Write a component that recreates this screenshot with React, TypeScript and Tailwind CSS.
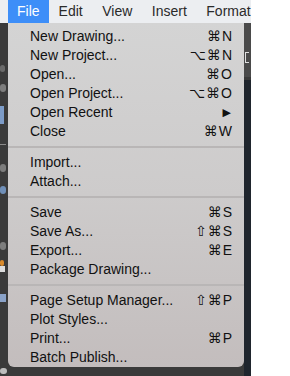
import React from 'react';

type Entry = { label: string; shortcut?: string; submenu?: boolean } | 'sep';

const ENTRIES: Entry[] = [
  { label: 'New Drawing...', shortcut: '⌘N' },
  { label: 'New Project...', shortcut: '⌥⌘N' },
  { label: 'Open...', shortcut: '⌘O' },
  { label: 'Open Project...', shortcut: '⌥⌘O' },
  { label: 'Open Recent', submenu: true },
  { label: 'Close', shortcut: '⌘W' },
  'sep',
  { label: 'Import...' },
  { label: 'Attach...' },
  'sep',
  { label: 'Save', shortcut: '⌘S' },
  { label: 'Save As...', shortcut: '⇧⌘S' },
  { label: 'Export...', shortcut: '⌘E' },
  { label: 'Package Drawing...' },
  'sep',
  { label: 'Page Setup Manager...', shortcut: '⇧⌘P' },
  { label: 'Plot Styles...' },
  { label: 'Print...', shortcut: '⌘P' },
  { label: 'Batch Publish...' },
];

const MENUS = ['Edit', 'View', 'Insert', 'Format'];

const font = { fontFamily: '"Liberation Sans", Arial, "DejaVu Sans", sans-serif' };
const symFont = { fontFamily: '"DejaVu Sans", sans-serif' };

function Shortcut({ keys }: { keys: string }) {
  const mods = keys.slice(0, -1);
  const key = keys.slice(-1);
  return (
    <span className="flex items-center">
      <span className="tracking-[1px]" style={symFont}>{mods}</span>
      <span>{key}</span>
    </span>
  );
}

export default function App() {
  return (
    <div className="flex w-[290px] h-[376px] bg-white overflow-hidden" style={font}>
      <div className="flex flex-col w-[251px] h-full">
        {/* menu bar */}
        <div className="flex h-[23px] bg-[#eceef1] text-[14px] leading-[23px] text-[#2a2a2a] whitespace-nowrap">
          <div className="ml-[8px] px-[9px] bg-[#3d8ef8] text-white">File</div>
          {MENUS.map((m) => (
            <div key={m} className="pl-[10px] pr-[9.5px]">{m}</div>
          ))}
        </div>

        <div className="flex flex-1 bg-[#3a3a3a]">
          {/* left toolbar edge */}
          <div className="w-[8px] flex flex-col">
            <div className="h-[42px]" />
            <div className="h-[7px] w-[5px] rounded-full bg-[#8a8a8a] opacity-60" />
            <div className="h-[12px]" />
            <div className="h-[8px] w-[6px] rounded-full bg-[#9a9a9a] opacity-70" />
            <div className="h-[14px]" />
            <div className="h-[18px] w-[4px] bg-[#7d9cc8]" />
            <div className="h-[20px]" />
            <div className="h-[6px] w-[6px] border-t border-[#8a8a8a]" />
            <div className="h-[14px]" />
            <div className="h-[8px] w-[6px] rounded-full bg-[#9a9a9a] opacity-70" />
            <div className="h-[14px]" />
            <div className="h-[8px] w-[6px] rounded-sm bg-[#6f8fb8]" />
            <div className="h-[48px]" />
            <div className="h-[8px] w-[6px] rounded-full bg-[#9a9a9a] opacity-70" />
            <div className="h-[10px]" />
            <div className="h-[6px] w-[4px] rounded-full bg-[#d98a2b]" />
            <div className="h-[6px] w-[5px] bg-[#dcdcdc]" />
            <div className="h-[22px]" />
            <div className="h-[8px] w-[6px] bg-[#8aa2c8]" />
            <div className="flex-1" />
            <div className="h-[6px] w-[7px] rounded-full bg-[#bdbdbd] mb-[2px]" />
          </div>

          {/* dropdown */}
          <div className="w-[236px] h-[344px] rounded-b-[6px] bg-gradient-to-b from-[#d4d4d4] via-[#cdcbcb] to-[#c3bdbd] pt-[4px] text-[14px] text-[#111111]">
            {ENTRIES.map((e, i) =>
              e === 'sep' ? (
                <div key={i} className="h-[12px] flex items-center">
                  <div className="w-full h-[2px] bg-[#b9b6b6]" />
                </div>
              ) : (
                <div key={i} className="flex items-center justify-between h-[19px] pl-[22px] pr-[12px] whitespace-nowrap">
                  <span>{e.label}</span>
                  {e.shortcut && <Shortcut keys={e.shortcut} />}
                  {e.submenu && <span className="text-[11px] mr-[1px]">▶</span>}
                </div>
              )
            )}
          </div>

          {/* right edge */}
          <div className="w-[7px] flex flex-col">
            <div className="h-[54px] bg-[#4a4a4a] relative">
              <div className="absolute left-[1px] top-[29px] w-[4px] h-[11px] border border-[#e0e0e0] border-r-0" />
            </div>
            <div className="h-[3px] bg-[#3a3a3a]" />
            <div className="flex-1 bg-[#1f252d]" />
          </div>
        </div>
      </div>
    </div>
  );
}
